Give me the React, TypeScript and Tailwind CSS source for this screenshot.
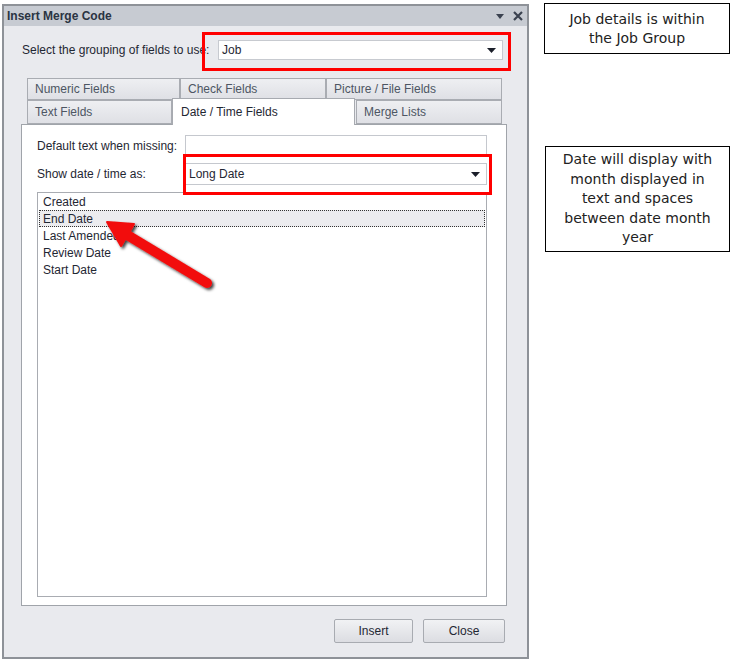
import React from 'react';

const ui = "font-['Liberation_Sans',Arial,sans-serif]";
const note = "font-['DejaVu_Sans',sans-serif]";

function Caret() {
  return (
    <svg width="9" height="5" viewBox="0 0 9 5" className="shrink-0">
      <path d="M0 0h9L4.5 5z" fill="#1b1f2a" />
    </svg>
  );
}

function Tab({ label, w, h = 'h-[22px]', active }: { label: string; w: string; h?: string; active?: boolean }) {
  if (active) {
    return (
      <div className={`${w} h-[27px] -mt-[2px] -mb-[1px] relative z-10 bg-white border border-b-0 border-[#a7aab0] flex items-center pl-[8px] text-[12px] text-[#1f2733]`}>
        {label}
      </div>
    );
  }
  return (
    <div className={`${w} ${h} bg-gradient-to-b from-[#eeeff2] to-[#dfe0e5] border border-[#a9acb2] flex items-center pl-[7px] text-[12px] text-[#4d5663]`}>
      {label}
    </div>
  );
}

function Arrow() {
  return (
    <svg className="absolute left-0 top-0 pointer-events-none" width="260" height="320">
      <defs>
        <filter id="sh" x="-20%" y="-20%" width="140%" height="140%">
          <feDropShadow dx="2" dy="2" stdDeviation="1.6" floodColor="#000" floodOpacity="0.75" />
        </filter>
      </defs>
      <g filter="url(#sh)">
        <line x1="207" y1="283" x2="124" y2="233" stroke="#f20f0f" strokeWidth="10" strokeLinecap="round" />
        <polygon points="107,222 134,224 121,246" fill="#f20f0f" stroke="#f20f0f" strokeWidth="2" strokeLinejoin="round" />
      </g>
    </svg>
  );
}

export default function App() {
  const items = ['Created', 'End Date', 'Last Amended', 'Review Date', 'Start Date'];

  return (
    <div className={`relative w-[736px] h-[660px] bg-white flex ${ui}`}>
      {/* dialog */}
      <div className="ml-[2px] mt-[4px] w-[527px] h-[655px] border-2 border-[#8e9298] bg-[#e9eaee] flex flex-col">
        <div className="h-[20px] bg-[#c7cbd2] flex items-center justify-between pl-[3px] pr-[4px]">
          <span className="text-[12px] font-bold text-[#2a3442]">Insert Merge Code</span>
          <div className="flex items-center gap-[9px]">
            <svg width="8" height="5" viewBox="0 0 8 5"><path d="M0 0h8L4 5z" fill="#3b4250" /></svg>
            <svg width="10" height="10" viewBox="0 0 10 10">
              <path d="M1 1l8 8M9 1l-8 8" stroke="#3b4250" strokeWidth="2.2" />
            </svg>
          </div>
        </div>

        {/* grouping row */}
        <div className="mt-[14px] ml-[18px] flex items-center">
          <span className="w-[196px] text-[12px] text-[#1f2733]">Select the grouping of fields to use:</span>
          <div className="w-[285px] h-[20px] bg-white border border-[#c7cad0] flex items-center justify-between pl-[3px] pr-[6px] text-[12px] text-[#1f2733]">
            Job
            <Caret />
          </div>
        </div>

        {/* tabs */}
        <div className="mt-[18px] ml-[23px] w-[475px] flex flex-col">
          <div className="flex">
            <Tab label="Numeric Fields" w="w-[153px]" />
            <Tab label="Check Fields" w="w-[146px]" />
            <Tab label="Picture / File Fields" w="w-[176px]" />
          </div>
          <div className="flex items-end">
            <Tab label="Text Fields" w="w-[145px]" h="h-[24px]" />
            <Tab label="Date / Time Fields" w="w-[183px]" active />
            <div className="ml-[1px]">
              <Tab label="Merge Lists" w="w-[146px]" h="h-[24px]" />
            </div>
          </div>
        </div>

        {/* panel */}
        <div className="ml-[17px] w-[486px] h-[482px] bg-white border border-[#a0a4aa] flex flex-col pl-[15px]">
          <div className="mt-[10px] flex items-center">
            <span className="w-[148px] text-[12px] text-[#1f2733]">Default text when missing:</span>
            <div className="w-[302px] h-[22px] border border-[#c5c8ce] bg-white" />
          </div>
          <div className="mt-[6px] flex items-center">
            <span className="w-[148px] text-[12px] text-[#1f2733]">Show date / time as:</span>
            <div className="w-[302px] h-[22px] border border-[#c5c8ce] bg-white flex items-center justify-between pl-[3px] pr-[6px] text-[12px] text-[#1f2733]">
              Long Date
              <Caret />
            </div>
          </div>
          <div className="mt-[7px] w-[450px] h-[405px] border border-[#a9acb2] bg-white flex flex-col px-[1px]">
            {items.map(it => (
              <div
                key={it}
                className={`h-[17px] flex items-center pl-[3px] text-[12px] text-[#1f2733] ${
                  it === 'End Date' ? 'bg-[#ececef] border border-dotted border-[#333]' : 'border border-transparent'
                }`}
              >
                {it}
              </div>
            ))}
          </div>
        </div>

        {/* buttons */}
        <div className="mt-[13px] ml-[330px] flex gap-[10px]">
          <button className="w-[79px] h-[24px] rounded-[2px] border border-[#a8abb1] bg-gradient-to-b from-[#f1f2f4] to-[#dcdde2] text-[12px] text-[#1f2733]">
            Insert
          </button>
          <button className="w-[82px] h-[24px] rounded-[2px] border border-[#a8abb1] bg-gradient-to-b from-[#f1f2f4] to-[#dcdde2] text-[12px] text-[#1f2733]">
            Close
          </button>
        </div>
      </div>

      {/* annotations */}
      <div className={`ml-[15px] flex flex-col ${note}`}>
        <div className="mt-[3px] w-[186px] h-[51px] border border-black flex flex-col items-center justify-center text-[14px] leading-[19px] text-[#222]">
          <span>Job details is within</span>
          <span>the Job Group</span>
        </div>
        <div className="mt-[92px] ml-[1px] w-[185px] h-[106px] border border-black flex flex-col items-center justify-center text-[14px] leading-[19.5px] text-[#222] text-center">
          <span>Date will display with</span>
          <span>month displayed in</span>
          <span>text and spaces</span>
          <span>between date month</span>
          <span>year</span>
        </div>
      </div>

      {/* highlights */}
      <div className="absolute left-[202px] top-[32px] w-[309px] h-[39px] border-[3px] border-[#ff0000] pointer-events-none" />
      <div className="absolute left-[183px] top-[154px] w-[309px] h-[41px] border-[3px] border-[#ff0000] pointer-events-none" />
      <Arrow />
    </div>
  );
}
